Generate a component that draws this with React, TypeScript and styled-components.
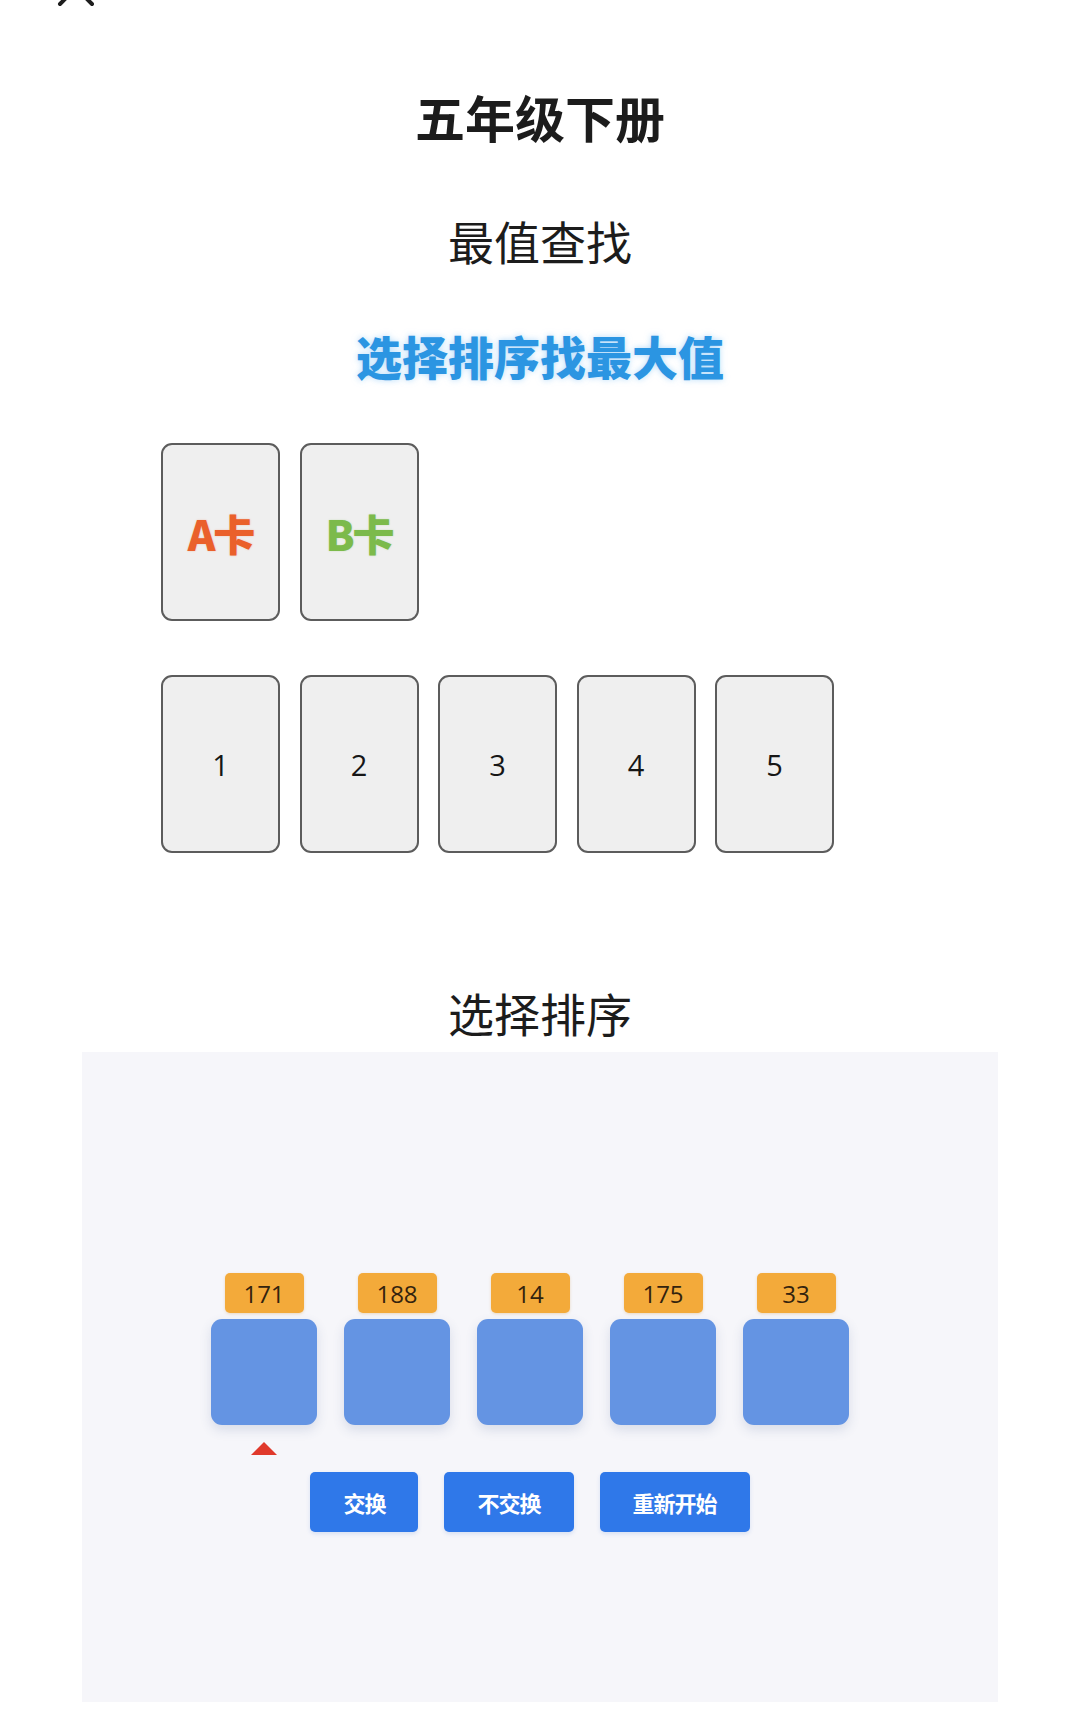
import styled, { createGlobalStyle } from "styled-components";

const GlobalStyle = createGlobalStyle`
  html, body {
    margin: 0;
    padding: 0;
    background: #ffffff;
  }
  body {
    font-family: "Noto Sans CJK SC", "Noto Sans", sans-serif;
    color: #1c1c1c;
  }
`;

const Page = styled.div`
  width: 1080px;
  display: flex;
  flex-direction: column;
  align-items: stretch;
`;

const TopBar = styled.div`
  height: 20px;
  overflow: hidden;
  padding-left: 56px;

  svg {
    display: block;
    margin-top: -32px;
  }
`;

const Heading = styled.h1<{ $size: number; $weight: number; $top: number; $color?: string }>`
  margin: ${(p) => p.$top}px 0 0;
  text-align: center;
  font-family: "Noto Sans CJK SC", sans-serif;
  font-size: ${(p) => p.$size}px;
  line-height: ${(p) => p.$size + 10}px;
  height: ${(p) => p.$size + 10}px;
  font-weight: ${(p) => p.$weight};
  color: ${(p) => p.$color || "#1c1c1c"};
`;

const GlowHeading = styled(Heading)`
  text-shadow: 0 0 6px rgba(120, 190, 245, 0.55);
`;

const CardRow = styled.div<{ $top: number }>`
  display: flex;
  gap: 19.5px;
  padding-left: 161px;
  margin-top: ${(p) => p.$top}px;
`;

const PaperCard = styled.div`
  width: 119px;
  height: 178px;
  box-sizing: border-box;
  border: 2px solid #5c5c5c;
  border-radius: 11px;
  background: #efefef;
  display: flex;
  align-items: center;
  justify-content: center;
`;

const LetterLabel = styled.span<{ $color: string }>`
  font-family: "Noto Sans CJK SC", sans-serif;
  font-size: 42px;
  font-weight: 900;
  color: ${(p) => p.$color};
  letter-spacing: -2px;
  text-shadow: 0 0 2px ${(p) => p.$color}55;
`;

const NumberLabel = styled.span`
  font-family: "Open Sans", "Noto Sans", sans-serif;
  font-size: 29px;
  color: #161616;
`;

const Panel = styled.section`
  margin: 12px 0 0 82px;
  width: 916px;
  height: 650px;
  background: #f6f6fa;
  box-sizing: border-box;
  padding: 221px 20px 0 0;
  display: flex;
  flex-direction: column;
  align-items: center;
`;

const BarRow = styled.div`
  display: flex;
  gap: 27px;
`;

const Column = styled.div`
  width: 106px;
  display: flex;
  flex-direction: column;
  align-items: center;
`;

const Badge = styled.div`
  width: 79px;
  height: 40px;
  border-radius: 5px;
  background: #f3aa3a;
  color: #33230e;
  font-family: "Open Sans", "Noto Sans", sans-serif;
  font-size: 24px;
  display: flex;
  align-items: center;
  justify-content: center;
  box-shadow: 0 1px 3px rgba(200, 130, 30, 0.25);
`;

const Block = styled.div`
  margin-top: 6px;
  width: 106px;
  height: 106px;
  border-radius: 11px;
  background: #6494e3;
  box-shadow: 0 5px 12px rgba(60, 90, 140, 0.16);
`;

const Pointer = styled.div<{ $on: boolean }>`
  margin-top: 17px;
  width: 0;
  height: 0;
  border-left: 13px solid transparent;
  border-right: 13px solid transparent;
  border-bottom: 13px solid ${(p) => (p.$on ? "#e0392b" : "transparent")};
`;

const ButtonRow = styled.div`
  display: flex;
  gap: 26px;
  margin-top: 17px;
`;

const ActionButton = styled.button`
  height: 60px;
  padding: 0 33px;
  border: none;
  border-radius: 5px;
  background: #2f78e9;
  color: #ffffff;
  font-family: "Noto Sans CJK SC", sans-serif;
  font-size: 22px;
  font-weight: 700;
  letter-spacing: -1px;
  box-shadow: 0 2px 4px rgba(40, 100, 200, 0.15);
  cursor: pointer;
`;

const values = [171, 188, 14, 175, 33];

export default function App() {
  return (
    <Page>
      <GlobalStyle />
      <TopBar>
        <svg width="40" height="40" viewBox="0 0 40 40">
          <path d="M4 4 L36 36 M36 4 L4 36" stroke="#1e1e1e" strokeWidth="4" strokeLinecap="round" />
        </svg>
      </TopBar>

      <Heading $size={50} $weight={700} $top={66}>
        五年级下册
      </Heading>
      <Heading $size={46} $weight={400} $top={66}>
        最值查找
      </Heading>
      <GlowHeading $size={46} $weight={900} $top={59} $color="#2b95e2">
        选择排序找最大值
      </GlowHeading>

      <CardRow $top={60}>
        <PaperCard>
          <LetterLabel $color="#ea602b">A卡</LetterLabel>
        </PaperCard>
        <PaperCard>
          <LetterLabel $color="#7cba4b">B卡</LetterLabel>
        </PaperCard>
      </CardRow>

      <CardRow $top={54}>
        {[1, 2, 3, 4, 5].map((n) => (
          <PaperCard key={n}>
            <NumberLabel>{n}</NumberLabel>
          </PaperCard>
        ))}
      </CardRow>

      <Heading $size={46} $weight={400} $top={131}>
        选择排序
      </Heading>

      <Panel>
        <BarRow>
          {values.map((v, i) => (
            <Column key={i}>
              <Badge>{v}</Badge>
              <Block />
              <Pointer $on={i === 0} />
            </Column>
          ))}
        </BarRow>
        <ButtonRow>
          <ActionButton>交换</ActionButton>
          <ActionButton>不交换</ActionButton>
          <ActionButton>重新开始</ActionButton>
        </ButtonRow>
      </Panel>
    </Page>
  );
}
